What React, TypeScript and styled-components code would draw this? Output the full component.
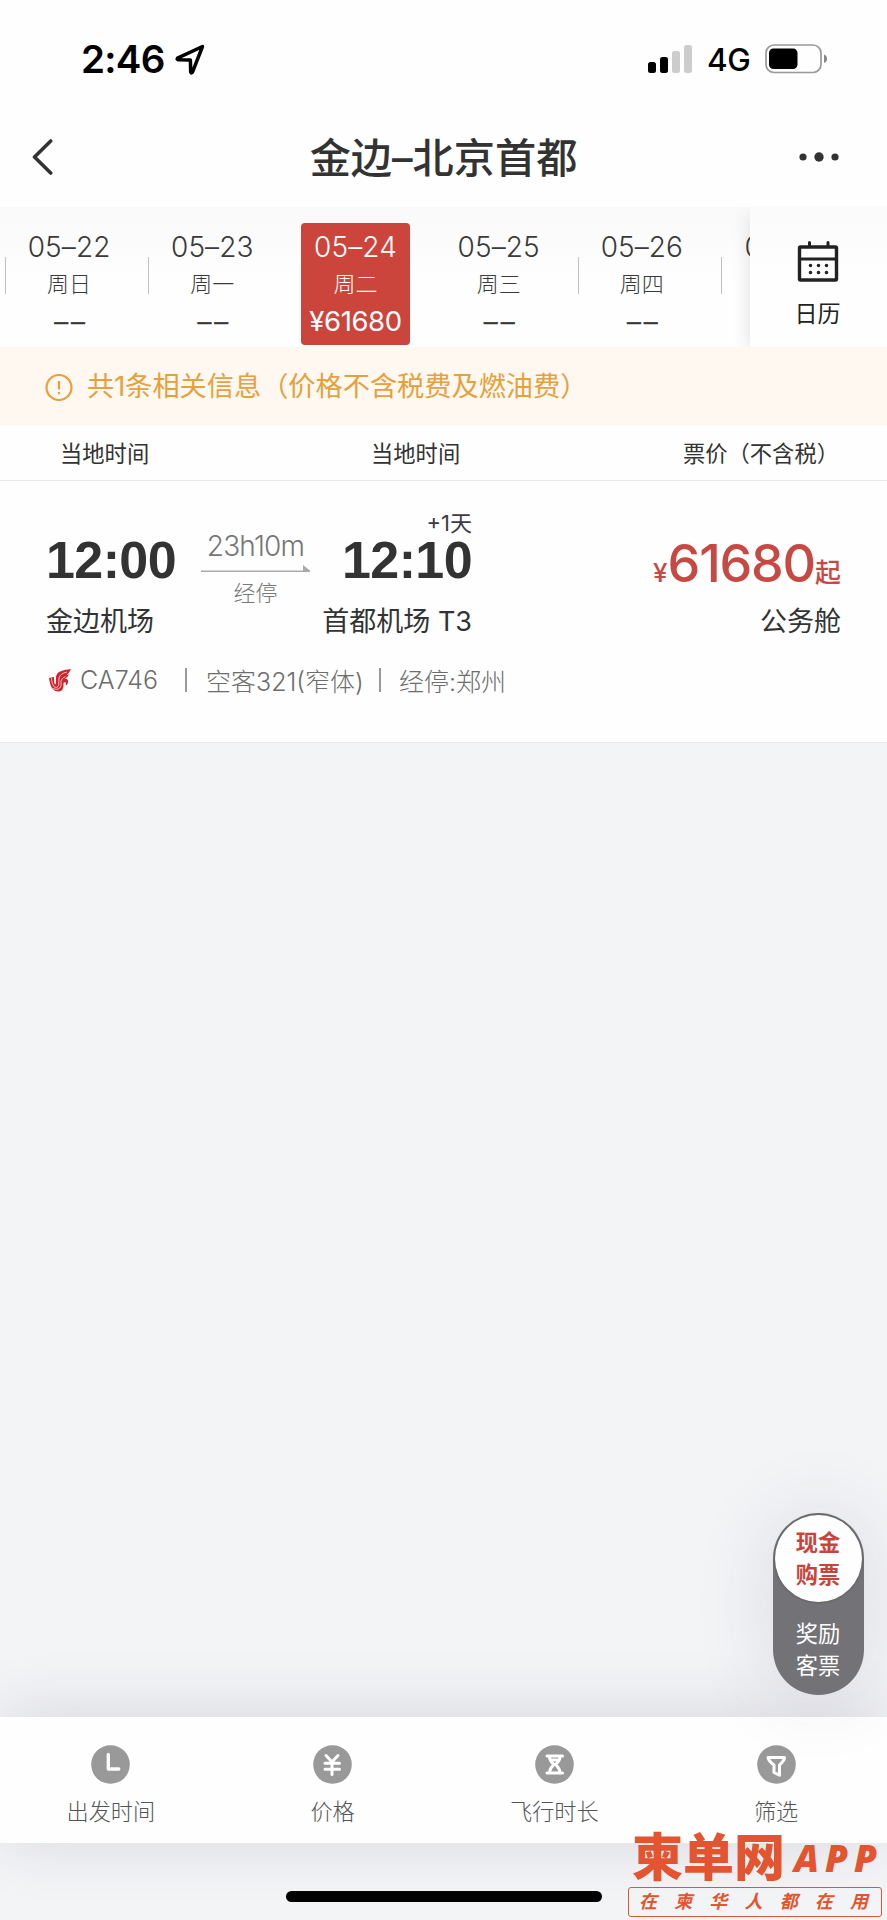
import React from 'react';
import styled, { createGlobalStyle, css } from 'styled-components';

const sans = `"Liberation Sans", "Noto Sans CJK SC", sans-serif`;
const ios = `Inter, "Noto Sans CJK SC", sans-serif`;

const GlobalStyle = createGlobalStyle`
  * { box-sizing: border-box; }
  body { margin: 0; background: #f3f4f6; }
`;

const Screen = styled.main`
  position: relative;
  display: flex;
  flex-direction: column;
  width: 887px;
  height: 1920px;
  overflow: hidden;
  background: #f3f4f6;
  color: #333;
  font-family: ${ios};
  white-space: nowrap;
`;

/* Status bar */
const StatusBar = styled.header`
  display: flex;
  align-items: center;
  height: 118px;
  padding: 0 59px 0 81px;
  background: #fefefe;
  color: #000;
`;
const Clock = styled.span`
  font-size: 38.5px;
  font-weight: 600;
  letter-spacing: -0.7px;
  width: 93px;
`;
const StatusIcons = styled.div`
  display: flex;
  align-items: center;
  margin-left: auto;
`;
const Network = styled.span`
  font-size: 31.5px;
  font-weight: 500;
  letter-spacing: -0.5px;
  width: 58px;
  margin-left: 14px;
  line-height: 32px;
  padding-top: 2px;
`;

/* Title bar */
const TitleBar = styled.nav`
  display: grid;
  grid-template-columns: 120px 1fr 120px;
  align-items: center;
  height: 89px;
  padding: 0 32px 11px;
  background: #fefefe;
`;
const Title = styled.h1`
  margin: 2px 0 0;
  text-align: center;
  font-size: 41.2px;
  line-height: 60px;
  font-weight: 500;
`;
const MoreIcon = styled.svg`
  justify-self: end;
  margin-right: 16px;
`;

/* Dates */
const DateBar = styled.section`
  display: flex;
  height: 140px;
  background: linear-gradient(#f9f9f9, #fefefe 50%);
`;
const DateList = styled.div`
  display: flex;
  width: 750px;
  padding: 16px 0 0 5px;
  overflow: hidden;
`;
const DateSlot = styled.div`
  display: flex;
  flex: 0 0 143.2px;
`;
const Divider = styled.i<{ $hidden?: boolean }>`
  width: 1px;
  height: 37px;
  margin: 34px 8.6px 0 0;
  background: ${(p) => (p.$hidden ? 'transparent' : '#c0c0c0')};
`;
const DateCard = styled.div<{ $active?: boolean }>`
  width: 109px;
  height: 122px;
  padding-top: 6px;
  border-radius: 4px;
  text-align: center;
  line-height: 37px;
  color: #3a3a3a;
  ${(p) =>
    p.$active &&
    css`
      background: #cc453d;
      color: #fff;
    `}
`;
const Day = styled.div`
  font-size: 28px;
  font-weight: 300;
  letter-spacing: 0.1px;
`;
const Weekday = styled.div`
  font-size: 22px;
  font-weight: 300;
`;
const Fare = styled.div`
  font-size: 27.5px;
  letter-spacing: -0.4px;
`;
const NoFare = styled(Fare)`
  font-family: ${sans};
  font-size: 25px;
  letter-spacing: 3px;
  text-indent: 4px;
  -webkit-text-stroke: 0.4px currentColor;
`;
const CalendarButton = styled.div`
  position: relative;
  flex: 0 0 137px;
  display: flex;
  flex-direction: column;
  align-items: center;
  padding: 33px 2px 0 0;
  background: linear-gradient(#fbfbfb, #fefefe 50%);
  box-shadow: -2px 6px 18px -2px rgba(0, 0, 0, 0.12);
  clip-path: inset(0 0 0 -40px);
  font-size: 23px;
  line-height: 30px;
  color: #222;
`;
const CalendarLabel = styled.span`
  margin-top: 17px;
`;

/* Notice */
const Notice = styled.section`
  display: flex;
  align-items: center;
  gap: 14px;
  height: 78px;
  padding: 0 0 0 45px;
  background: #fff8f1;
  color: #e6a03c;
  font-size: 27.2px;
  line-height: 36px;
`;
const NoticeIcon = styled.svg`
  margin-top: 2px;
`;
const NoticeText = styled.span`
  margin-top: 2px;
`;

const Columns = styled.section`
  display: flex;
  align-items: center;
  height: 56px;
  padding: 2px 48px 0 60px;
  background: #fefefe;
  border-bottom: 1px solid #e9e9e9;
  font-size: 22.3px;
  line-height: 30px;
`;
const Column = styled.span<{ $grow?: boolean }>`
  flex: ${(p) => (p.$grow ? '1' : '0 0 311px')};
`;

/* Flight */
const Flight = styled.article`
  height: 262px;
  padding: 32px 46px 0 46px;
  background: #fefefe;
  border-bottom: 1px solid #e6e7e9;
`;
const Route = styled.div`
  display: flex;
  height: 127px;
`;
const Stop = styled.div<{ $width: number; $end?: boolean }>`
  width: ${(p) => p.$width}px;
  text-align: ${(p) => (p.$end ? 'right' : 'left')};
`;
const DayOffset = styled.div`
  height: 20px;
  line-height: 20px;
  font-size: 22px;
  color: #3c3a48;
`;
const Time = styled.div`
  font-family: ${sans};
  font-size: 52px;
  line-height: 54px;
  font-weight: 700;
  letter-spacing: -0.6px;
`;
const Place = styled.div`
  margin-top: 17px;
  font-size: 27px;
  line-height: 36px;
`;
const Duration = styled.div`
  width: 109px;
  margin-left: 14px;
  padding-top: 14px;
  display: flex;
  flex-direction: column;
  align-items: center;
  color: #777;
  font-weight: 300;
`;
const DurationText = styled.span`
  font-size: 28px;
  line-height: 38px;
  letter-spacing: -0.8px;
`;
const Via = styled.span`
  margin-top: 8px;
  font-size: 22px;
  line-height: 24px;
`;
const FareBlock = styled.div`
  margin-left: auto;
  text-align: right;
`;
const Price = styled.div`
  margin-top: 26px;
  height: 48px;
  line-height: 50px;
  color: #c64a43;
  font-size: 52px;
  font-weight: 500;
  letter-spacing: -1.2px;
`;
const PriceUnit = styled.span`
  font-size: 26px;
  font-weight: 500;
  letter-spacing: 0;
`;
const Meta = styled.div`
  display: flex;
  align-items: center;
  height: 30px;
  margin-top: 25px;
  font-size: 25px;
  font-weight: 300;
  color: #6d6d6d;
`;
const MetaItem = styled.span<{ $width?: number }>`
  width: ${(p) => (p.$width ? `${p.$width}px` : 'auto')};
  margin-top: -1px;
`;
const CarrierLogo = styled.svg`
  display: block;
  margin: 1px 0 0 3px;
`;
const Bar = styled.i<{ $gap: number }>`
  flex: none;
  width: 2px;
  height: 24px;
  margin-right: ${(p) => p.$gap}px;
  background: #999;
`;

/* Cash / award switch */
const Switch = styled.div`
  position: absolute;
  right: 23px;
  top: 1513px;
  width: 91px;
  height: 182px;
  padding: 2px;
  border-radius: 46px;
  background: #737277;
  box-shadow: 0 0 80px rgba(60, 55, 100, 0.13);
  text-align: center;
  font-size: 22.2px;
  line-height: 32px;
  color: #fff;
`;
const SwitchOn = styled.div`
  height: 87px;
  padding: 12px 1px 0 0;
  border-radius: 50%;
  background: #fefefe;
  color: #c8433c;
  font-weight: 600;
  box-shadow: 0 0 3px rgba(0, 0, 0, 0.3);
`;
const SwitchOff = styled.div`
  padding: 16px 1px 0 0;
`;

/* Bottom bar */
const Results = styled.div`
  flex: 1;
`;
const Filters = styled.nav`
  display: grid;
  grid-template-columns: repeat(4, 1fr);
  height: 126px;
  margin-bottom: 48px;
  background: #fefefe;
  box-shadow: 0 -3px 66px rgba(50, 45, 80, 0.14);
`;
const Filter = styled.div`
  display: flex;
  flex-direction: column;
  align-items: center;
  padding-top: 28px;
  gap: 13px;
  font-size: 22.2px;
  font-weight: 300;
  line-height: 30px;
  color: #555;
`;
const HomeIndicator = styled.div`
  width: 316px;
  height: 11px;
  margin: 0 auto 18px;
  border-radius: 6px;
  background: #000;
`;

/* Site mark over the bottom corner */
const Mark = styled.aside`
  position: absolute;
  right: 5px;
  bottom: 3px;
  width: 254px;
  color: #e35430;
  font-family: ${sans};
`;
const MarkName = styled.div`
  display: flex;
  align-items: center;
  padding-left: 4px;
  height: 50px;
  margin-bottom: 3px;
  line-height: 50px;
  font-size: 51px;
  font-weight: 900;
`;
const MarkApp = styled.span`
  margin: -2px 0 0 9px;
  font: italic 800 37px/36px "Open Sans", "Noto Sans", sans-serif;
  letter-spacing: 6px;
`;
const MarkTag = styled.div`
  display: flex;
  justify-content: space-between;
  height: 30px;
  padding: 0 13px 0 10px;
  border: 1px solid #e35430;
  border-radius: 3px;
  font-size: 18px;
  line-height: 29px;
  font-weight: 700;
  font-style: italic;
`;

const dates = [
  ['05–22', '周日'],
  ['05–23', '周一'],
  ['05–24', '周二', '¥61680'],
  ['05–25', '周三'],
  ['05–26', '周四'],
  ['05–27', '周五'],
];

const filters: [string, React.ReactNode][] = [
  ['出发时间', <path d="M17.3 9.500v14.500h10.500" />],
  [
    '价格',
    <path strokeWidth="3" d="M13 10.500l6 6.500 6-6.500M19 17v12.500M12 18.300h14.500M12 24.300h14.500" />,
  ],
  [
    '飞行时长',
    <path
      strokeWidth="3"
      d="M12 11h15.500M12 28h15.500M14.500 11.500c0 4.500 2.500 6 4.500 8-2 2-4.500 3.800-4.500 8M25 11.500c0 4.500-2.500 6-4.500 8 2 2 4.500 3.800 4.500 8M17.500 15h4.500"
    />,
  ],
  [
    '筛选',
    <path strokeWidth="3" d="M11 12.500h16.500q0 3-5 7.500v10.200l-5.500-2.700v-7.500q-5.500-4-6-7.500z" />,
  ],
];

export default function App() {
  return (
    <Screen>
      <GlobalStyle />
      <StatusBar>
        <Clock>2:46</Clock>
        <svg width="32" height="32" viewBox="0 0 32 32" fill="none" stroke="#000" strokeWidth="3.5" strokeLinejoin="round">
          <path d="M28.500 3.500L3.500 15.200q-1 1.300.6 1.600l12.300.3.300 12q.5 1.600 1.700.3z" />
        </svg>
        <StatusIcons>
          <svg width="45" height="29" viewBox="0 0 45 29">
            <rect y="17" width="8" height="11" rx="2.500" />
            <rect x="12" y="12" width="8" height="16" rx="2.500" />
            <rect x="24" y="6" width="8" height="22" rx="2.500" fill="#ccc" />
            <rect x="36" y="0" width="8" height="28" rx="2.500" fill="#ccc" />
          </svg>
          <Network>4G</Network>
          <svg width="63" height="30" viewBox="0 0 63 30">
            <rect x="1" y="1" width="55" height="27.500" rx="8" fill="none" stroke="#999" strokeWidth="1.700" />
            <rect x="4" y="4.500" width="28.500" height="20.500" rx="4.500" />
            <path d="M59 10.500q3 1 3 4.200t-3 4.300z" fill="#888" />
          </svg>
        </StatusIcons>
      </StatusBar>

      <TitleBar>
        <svg width="22" height="38" viewBox="0 0 22 38" fill="none" stroke="#333" strokeWidth="3.600" strokeLinecap="round">
          <path d="M18.700 3L2.500 19l16.200 16" strokeLinejoin="round" />
        </svg>
        <Title>金边–北京首都</Title>
        <MoreIcon width="42" height="12" viewBox="0 0 42 12" fill="#333">
          <circle cx="6" cy="6" r="3.600" />
          <circle cx="22" cy="6" r="4.700" />
          <circle cx="38" cy="6" r="3.600" />
        </MoreIcon>
      </TitleBar>

      <DateBar>
        <DateList>
          {dates.map(([day, weekday, fare], i) => (
            <DateSlot key={day}>
              <Divider $hidden={i === 2 || i === 3} />
              <DateCard $active={!!fare}>
                <Day>{day}</Day>
                <Weekday>{weekday}</Weekday>
                {fare ? <Fare>{fare}</Fare> : <NoFare>––</NoFare>}
              </DateCard>
            </DateSlot>
          ))}
        </DateList>
        <CalendarButton>
          <svg width="42" height="42" viewBox="0 0 42 42" fill="none" stroke="#222" strokeWidth="3.400">
            <rect x="2.500" y="7" width="37" height="33" rx="1" />
            <path d="M2 19h38" strokeWidth="2.800" />
            <path d="M12.500 2.500v4M31 2.500v4" strokeLinecap="round" strokeWidth="3" />
            <path d="M13.500 25.500h.01M21.500 25.500h.01M29.500 25.500h.01M13.500 32.500h.01M21.500 32.500h.01M29.500 32.500h.01" strokeLinecap="round" strokeWidth="3.600" />
          </svg>
          <CalendarLabel>日历</CalendarLabel>
        </CalendarButton>
      </DateBar>

      <Notice>
        <NoticeIcon width="28" height="28" viewBox="0 0 28 28" fill="none" stroke="#e6a03c" strokeWidth="2.200">
          <circle cx="14" cy="14.500" r="12.500" />
          <path d="M14 8v8.500M14 19v2.200" />
        </NoticeIcon>
        <NoticeText>共1条相关信息（价格不含税费及燃油费）</NoticeText>
      </Notice>

      <Columns>
        <Column>当地时间</Column>
        <Column $grow>当地时间</Column>
        <span>票价（不含税）</span>
      </Columns>

      <Flight>
        <Route>
          <Stop $width={141}>
            <DayOffset />
            <Time>12:00</Time>
            <Place>金边机场</Place>
          </Stop>
          <Duration>
            <DurationText>23h10m</DurationText>
            <svg width="109" height="8" viewBox="0 0 109 8" fill="#aaa">
              <path d="M0 5.500h102V0l7 5.500v1.500H0z" />
            </svg>
            <Via>经停</Via>
          </Duration>
          <Stop $width={162} $end>
            <DayOffset>+1天</DayOffset>
            <Time>12:10</Time>
            <Place>首都机场 T3</Place>
          </Stop>
          <FareBlock>
            <Price>
              <PriceUnit>¥</PriceUnit>61680<PriceUnit>起</PriceUnit>
            </Price>
            <Place>公务舱</Place>
          </FareBlock>
        </Route>
        <Meta>
          <MetaItem $width={34}>
            <CarrierLogo width="22" height="23" viewBox="0 0 22 23" fill="#d0242c">
              <path d="M22 0C14 1 8 2 7 8v6q0 2-1.500 1Q5 12 5 8L0 9q1 7 3 10 3 4 7 3.500 4-.5 4.500-5.500v-3q.5-1 2.500-.5l-.5 3q3-1.500 2.500-5-.5-2-3-2 3-1.500 4-4l-2.500.5Q20.500 4 22 0z" />
              <path
                d="M2.300 9q.7 6.500 2.700 8.700 3.500 2 4.700-1.500L10 9q1-4.500 8-6M4 19.500q6 2.500 8-2.500v-5q.5-3 4.500-4.500"
                fill="none"
                stroke="#fefefe"
                strokeWidth="0.700"
              />
            </CarrierLogo>
          </MetaItem>
          <MetaItem $width={105}>CA746</MetaItem>
          <Bar $gap={19} />
          <MetaItem $width={173}>空客321(窄体)</MetaItem>
          <Bar $gap={18} />
          <MetaItem>经停:郑州</MetaItem>
        </Meta>
      </Flight>

      <Results />

      <Filters>
        {filters.map(([label, glyph]) => (
          <Filter key={label}>
            <svg width="39" height="39" viewBox="0 0 39 39" fill="none" stroke="#fff" strokeWidth="3.300" strokeLinecap="round" strokeLinejoin="round">
              <circle cx="19.500" cy="19.500" r="19.300" fill="#999" stroke="none" />
              {glyph}
            </svg>
            {label}
          </Filter>
        ))}
      </Filters>
      <HomeIndicator />

      <Switch>
        <SwitchOn>
          现金
          <br />
          购票
        </SwitchOn>
        <SwitchOff>
          奖励
          <br />
          客票
        </SwitchOff>
      </Switch>

      <Mark>
        <MarkName>
          柬单网<MarkApp>APP</MarkApp>
        </MarkName>
        <MarkTag>
          {[...'在柬华人都在用'].map((c, i) => (
            <span key={i}>{c}</span>
          ))}
        </MarkTag>
      </Mark>
    </Screen>
  );
}
